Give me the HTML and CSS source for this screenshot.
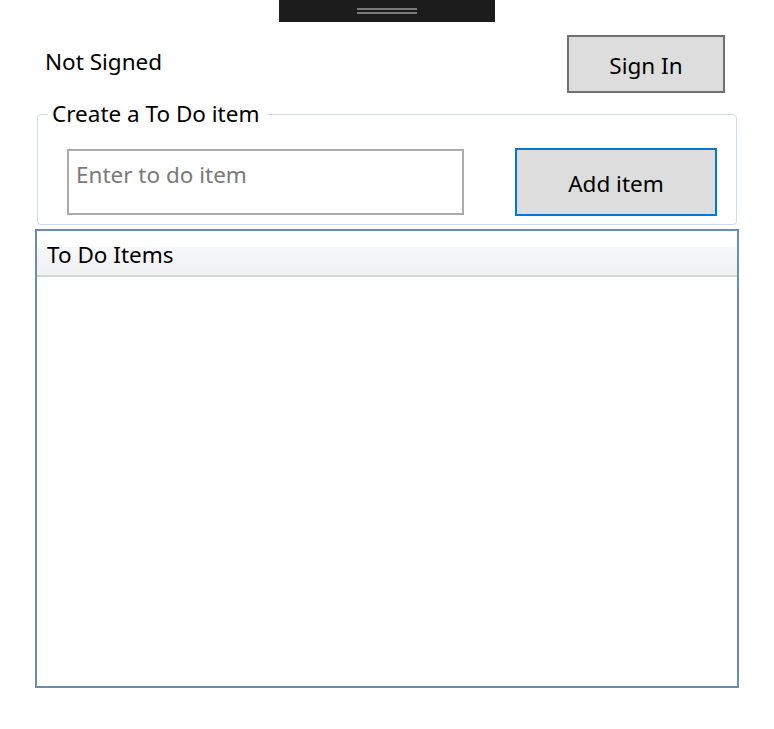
FILE: index.html
```html
<!DOCTYPE html>
<html>
<head>
<meta charset="utf-8">
<link rel="stylesheet" href="styles.css">
</head>
<body>
<div class="handle"><span class="grip"></span><span class="grip"></span></div>
<div class="top-row">
  <span class="status">Not Signed</span>
  <button class="btn sign-in">Sign In</button>
</div>
<fieldset class="group">
  <legend>Create a To Do item</legend>
  <div class="group-row">
    <input class="todo-input" type="text" placeholder="Enter to do item">
    <button class="btn add">Add item</button>
  </div>
</fieldset>
<div class="list">
  <div class="list-header">To Do Items</div>
</div>
</body>
</html>
```
FILE: styles.css
```css
html, body {
  margin: 0;
  padding: 0;
  background: #ffffff;
  font-family: "Noto Sans", "Open Sans", sans-serif;
  color: #000;
}
.handle {
  width: 216px;
  height: 22px;
  margin: 0 auto;
  background: #1c1c1c;
  display: flex;
  flex-direction: column;
  align-items: center;
  padding-top: 8px;
  box-sizing: border-box;
  gap: 2px;
}
.grip {
  display: block;
  width: 60px;
  height: 2px;
  background: #7a7a7a;
}
.top-row {
  display: flex;
  justify-content: space-between;
  align-items: flex-start;
  padding: 13px 49px 0 45px;
}
.status {
  font-size: 22.5px;
  line-height: 28px;
  margin-top: 13px;
}
.btn {
  font-family: inherit;
  font-size: 22.5px;
  color: #000;
  background: #dddddd;
  border-style: solid;
  border-width: 2px;
  border-radius: 0;
  padding: 0;
  margin: 0;
}
.sign-in {
  width: 158px;
  height: 58px;
  border-color: #707070;
  padding-top: 3px;
}
.group {
  margin: 8px 0 0 37px;
  width: 700px;
  height: 124px;
  box-sizing: border-box;
  border: 1px solid #d3dde6;
  border-radius: 4px;
  padding: 0;
}
.group legend {
  font-size: 22.5px;
  line-height: 26px;
  padding: 0 8px 0 4px;
  margin-left: 10px;
}
.group-row {
  display: flex;
  justify-content: space-between;
  align-items: flex-start;
  padding: 22px 19px 0 29px;
}
.todo-input {
  width: 397px;
  height: 66px;
  box-sizing: border-box;
  border: 2px solid #ababab;
  font-family: inherit;
  font-size: 22.5px;
  padding: 7px 8px 23px 7px;
  margin: 0;
  outline: none;
  color: #000;
}
.todo-input::placeholder {
  color: #7a7a7a;
}
.add {
  width: 202px;
  height: 68px;
  margin-top: -1px;
  border-color: #0078d7;
  padding-top: 2px;
}
.list {
  margin: 4px 0 0 35px;
  width: 704px;
  height: 459px;
  box-sizing: border-box;
  border: 2px solid #6b8db2;
  padding-top: 16px;
}
.list-header {
  height: 30px;
  box-sizing: border-box;
  background: linear-gradient(#f6f7f8, #eff1f3);
  border-bottom: 2px solid #d5d5d5;
  font-size: 22.5px;
  line-height: 15px;
  padding-left: 10px;
}
```
